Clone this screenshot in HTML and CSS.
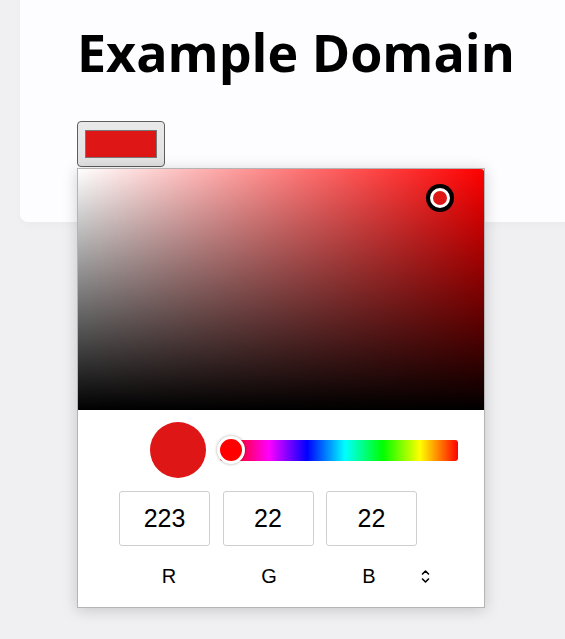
FILE: index.html
```html
<!DOCTYPE html>
<html>
<head>
<meta charset="utf-8">
<link rel="stylesheet" href="styles.css">
</head>
<body>
<div class="card">
  <h1 class="title">Example Domain</h1>
  <div class="picker-anchor">
    <button class="color-button" type="button"><span class="color-swatch"></span></button>
    <div class="popup">
      <div class="sv-area">
        <span class="sv-handle"></span>
      </div>
      <div class="controls">
        <span class="preview"></span>
        <div class="hue-bar">
          <span class="hue-thumb"></span>
        </div>
      </div>
      <div class="inputs">
        <div class="field">223</div>
        <div class="field">22</div>
        <div class="field">22</div>
      </div>
      <div class="labels">
        <span class="label">R</span>
        <span class="label">G</span>
        <span class="label">B</span>
        <span class="toggle">
          <svg width="9" height="15" viewBox="0 0 9 15" fill="none" stroke="#000" stroke-width="1.6" stroke-linecap="round" stroke-linejoin="round"><path d="M1.5 5 L4.5 2 L7.5 5"/><path d="M1.5 10 L4.5 13 L7.5 10"/></svg>
        </span>
      </div>
    </div>
  </div>
</div>
</body>
</html>
```
FILE: styles.css
```css
html {
  min-height: 100%;
  background: #f0f0f2;
}
body {
  margin: 0;
  min-height: 639px;
  background: #f0f0f2;
  font-family: "Liberation Sans", Arial, sans-serif;
}
.card {
  margin: -20px 0 0 20px;
  padding: 20px 0 55px 57px;
  background: #fdfdff;
  border-radius: 8px 0 0 8px;
  box-shadow: 2px 3px 7px 2px rgba(0, 0, 0, 0.02);
  display: flex;
  flex-direction: column;
  align-items: flex-start;
}
.title {
  margin: 0 0 43px 0;
  padding-top: 26px;
  font-family: "Open Sans", sans-serif;
  font-weight: 700;
  font-size: 52px;
  line-height: 52px;
  color: #000;
}
.picker-anchor {
  position: relative;
}
.color-button {
  display: flex;
  align-items: center;
  justify-content: center;
  width: 88px;
  height: 46px;
  padding: 0;
  margin: 0;
  background: linear-gradient(#e9e9e9, #e2e2e2);
  border: 1px solid #5e5e5e;
  border-radius: 4px;
  box-sizing: border-box;
}
.color-swatch {
  display: block;
  width: 72px;
  height: 28px;
  box-sizing: border-box;
  background: #df1616;
  border: 1px solid #777;
}
.popup {
  position: absolute;
  left: 0;
  top: 47px;
  width: 408px;
  box-sizing: border-box;
  background: #fff;
  border: 1px solid #b4b4b4;
  box-shadow: 0 2px 14px rgba(0, 0, 0, 0.18);
  padding-bottom: 20px;
  z-index: 2;
}
.sv-area {
  position: relative;
  height: 241px;
  background:
    linear-gradient(to top, #000, rgba(0, 0, 0, 0)),
    linear-gradient(to right, #fff, #f00);
  border-top-right-radius: 3px;
}
.sv-handle {
  position: absolute;
  left: 352px;
  top: 19px;
  width: 14px;
  height: 14px;
  border-radius: 50%;
  background: #df1616;
  border: 3px solid #fff;
  box-shadow: 0 0 0 4px #000;
}
.controls {
  display: flex;
  align-items: center;
  padding: 12px 0 0 72px;
  height: 56px;
}
.preview {
  width: 56px;
  height: 56px;
  border-radius: 50%;
  background: #df1616;
  flex: none;
}
.hue-bar {
  position: relative;
  margin-left: 14px;
  width: 238px;
  height: 21px;
  border-radius: 3px;
  background: linear-gradient(to right, #f00 11px, #f0f 49px, #00f 87px, #0ff 125px, #0f0 163px, #ff0 200px, #f00 238px);
}
.hue-thumb {
  position: absolute;
  left: -3px;
  top: -4px;
  width: 22px;
  height: 22px;
  border-radius: 50%;
  background: #f00;
  border: 3px solid #fff;
  box-shadow: 0 0 3px rgba(0, 0, 0, 0.35);
}
.inputs {
  display: flex;
  gap: 12.5px;
  padding: 13px 0 0 41px;
}
.field {
  width: 91px;
  height: 55px;
  box-sizing: border-box;
  border: 1px solid #cfcfcf;
  border-radius: 3px;
  display: flex;
  align-items: center;
  justify-content: center;
  font-size: 25px;
  color: #000;
}
.labels {
  display: flex;
  align-items: center;
  padding: 19px 0 0 41px;
  height: 22px;
}
.label {
  width: 100px;
  text-align: center;
  font-size: 20px;
  line-height: 22px;
  color: #000;
}
.toggle {
  display: flex;
  margin-left: 2px;
}
```
